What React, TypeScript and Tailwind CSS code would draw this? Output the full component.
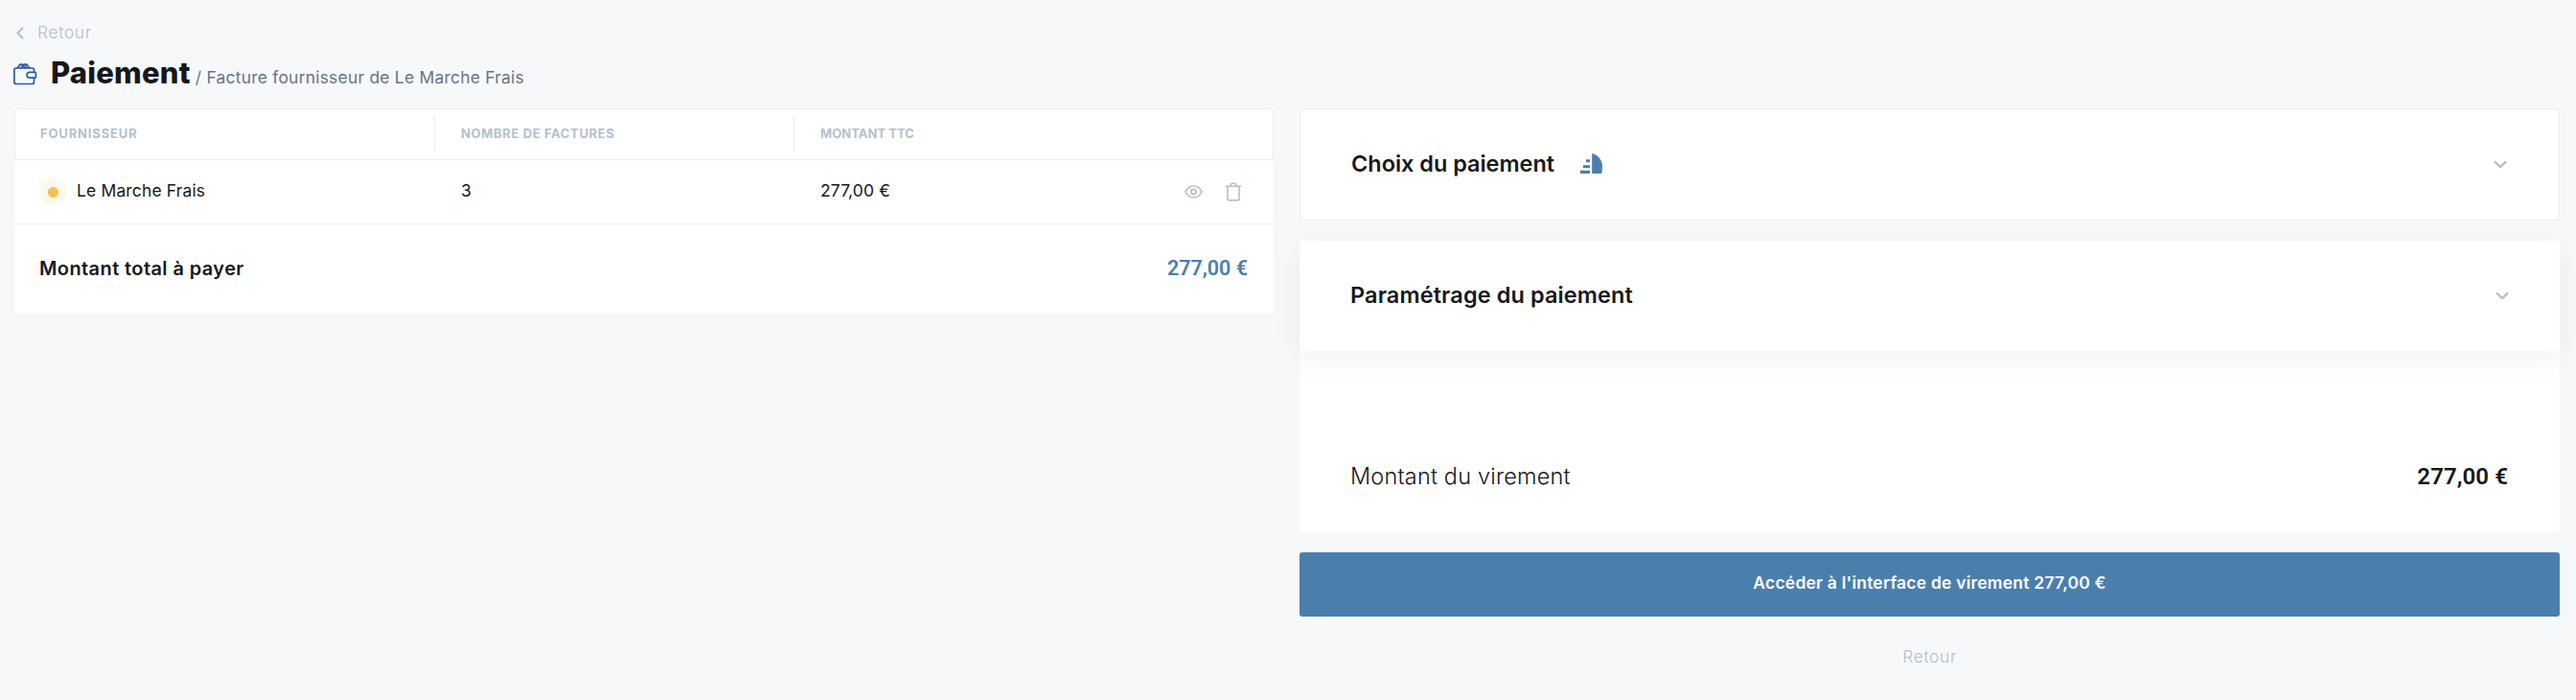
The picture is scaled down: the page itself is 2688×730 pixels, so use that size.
import React from "react";

const WalletIcon = () => (
  <svg className="mt-[2px] h-[23px] w-[25px] shrink-0" viewBox="0 0 25 23" fill="none" stroke="#2a5ca6" strokeWidth="1.7" strokeLinecap="round" strokeLinejoin="round">
    <path d="M21.500 9V7a2 2 0 0 0-2-2H2.900a2 2 0 0 0-2 2v12.500a2 2 0 0 0 2 2h16.600a2 2 0 0 0 2-2V15" />
    <path d="M17 9.300h5.500a.900.900 0 0 1 .900.900v4a.900.900 0 0 1-.900.900H17a2.900 2.900 0 0 1 0-5.800Z" />
    <path d="M4.500 4.800 6.800 1.200h2.400l2.500 3.600M10 2.400l1-1.200h3l2.700 3.600M8 4.800l1-2M13.500 4.800l-.800-2" />
  </svg>
);

const EyeIcon = () => (
  <svg className="h-[14px] w-[19px]" viewBox="0 0 19 14" fill="none" stroke="#b5bfcd" strokeWidth="1.700">
    <path d="M1 7c1.700-3.700 4.800-6 8.500-6S16.300 3.300 18 7c-1.700 3.700-4.800 6-8.500 6S2.700 10.700 1 7Z" />
    <circle cx="9.500" cy="7" r="2.600" />
  </svg>
);

const TrashIcon = () => (
  <svg className="h-[20px] w-[16px]" viewBox="0 0 16 20" fill="none" stroke="#b5bfcd" strokeWidth="1.600">
    <path d="M0 4.200h16M2 4.200v13a1.700 1.700 0 0 0 1.700 1.700h8.600a1.700 1.700 0 0 0 1.700-1.700v-13M5.200 4V2.500A1.300 1.300 0 0 1 6.500 1.200h3a1.300 1.300 0 0 1 1.300 1.300V4" />
  </svg>
);

const BankLogo = () => (
  <svg className="h-[22px] w-[23px]" viewBox="0 0 23 22" fill="#4b7fab">
    <path d="M12.200 0C18.500 1.400 23 6.800 23 13.500c0 2.800-.2 5.200-.7 7.500H12.200Z" />
    <path d="M6 6.300h4v3H6zM3 12.200h7v3H3zM0 17.800h10V21H0z" />
  </svg>
);

const Chevron = () => (
  <svg className="h-[9px] w-[14px]" viewBox="0 0 14 9" fill="none" stroke="#b5bfcd" strokeWidth="2.400">
    <path d="m1 1.300 6 5.700 6-5.700" />
  </svg>
);

const App = () => {
  return (
    <div className="h-[730px] w-full overflow-hidden bg-[#f7f8fa] pl-[15px] pr-[17px] font-['Inter',sans-serif] text-[17.5px] font-normal text-[#17181a]">
      <header className="h-[113px] pt-[20px]">
        <a href="#" className="flex h-[28px] items-center pl-[2px] font-light tracking-[0.6px] text-[#b5bfcd]">
          <svg className="mr-[14px] h-[13px] w-[8px]" viewBox="0 0 8 13" fill="none" stroke="#b5bfcd" strokeWidth="2.200">
            <path d="M7 .8 1.500 6.500 7 12.200" />
          </svg>
          Retour
        </a>
        <div className="-ml-px flex h-[56px] items-center">
          <WalletIcon />
          <div className="ml-[14px] flex items-baseline">
            <h1 className="text-[31px] leading-[40px] font-extrabold tracking-[0.2px]">Paiement</h1>
            <p className="ml-[5px] tracking-[0.2px] text-[#68748a]">/ Facture fournisseur de Le Marche Frais</p>
          </div>
        </div>
      </header>

      <main className="grid grid-cols-[1314px_minmax(0,1fr)] items-start gap-[27px]">
        <section className="bg-white">
          <div className="flex h-[54px] items-center rounded-t-[4px] border border-[#e9ecf2] text-[13px] font-bold text-[#b5bfcd]">
            <div className="flex h-[38px] w-[438px] items-center border-r border-[#e9ecf2] pl-[26px] tracking-[0.85px]">FOURNISSEUR</div>
            <div className="flex h-[38px] w-[375px] items-center border-r border-[#e9ecf2] pl-[27px] tracking-[0.64px]">NOMBRE DE FACTURES</div>
            <div className="pl-[27px] tracking-[0.05px]">MONTANT TTC</div>
          </div>
          <div className="flex h-[67px] items-center border-b border-[#e9ecf2] tracking-[0.14px]">
            <div className="flex w-[466px] items-center pl-[27px]">
              <span className="flex size-[27px] items-center justify-center rounded-full bg-[#fef8ec]">
                <span className="size-[11px] rounded-full bg-[#f5c153]" />
              </span>
              <span className="ml-[11px] pb-px">Le Marche Frais</span>
            </div>
            <div className="w-[375px] pb-px">3</div>
            <div className="pb-px">277,00 €</div>
            <div className="ml-auto mr-[34px] flex items-center gap-[24px]">
              <EyeIcon />
              <TrashIcon />
            </div>
          </div>
          <div className="flex h-[93px] items-center justify-between pr-[27px] pl-[26px] font-semibold">
            <span className="pb-[2px] text-[20px] tracking-[0.4px]">Montant total à payer</span>
            <span className="font-['Roboto',sans-serif] text-[21.5px] text-[#4b7fab]">277,00 €</span>
          </div>
        </section>

        <section>
          <div className="flex h-[117px] items-center rounded-[4px] border border-[#e9ecf2] bg-white pr-[54px] pl-[53px]">
            <h2 className="pb-[2px] text-[23.5px] font-semibold tracking-[-0.03px]">Choix du paiement</h2>
            <span className="ml-[27px] pb-px">
              <BankLogo />
            </span>
            <span className="ml-auto">
              <Chevron />
            </span>
          </div>

          <div className="mt-[21px] rounded-[4px] bg-white">
            <div className="flex h-[115px] items-center justify-between rounded-[4px] bg-white pr-[53px] pl-[53px] shadow-[0_8px_32px_rgba(0,0,0,0.06)]">
              <h2 className="pb-[2px] text-[23.5px] font-semibold tracking-[0.1px]">Paramétrage du paiement</h2>
              <Chevron />
            </div>
            <div className="flex h-[189px] items-end justify-between pr-[54px] pb-[40px] pl-[53px] text-[23.5px] leading-[36px]">
              <span className="font-light tracking-[0.18px]">Montant du virement</span>
              <span className="font-['Roboto',sans-serif] text-[24px] font-semibold tracking-[0.1px]">277,00 €</span>
            </div>
          </div>

          <button type="button" className="mt-[21px] h-[67px] w-full rounded-[3px] bg-[#4b7fab] pb-[2px] font-semibold tracking-[0.21px] text-white">
            Accéder à l'interface de virement 277,00 €
          </button>
          <a href="#" className="mt-[28px] block text-center font-light leading-[28px] tracking-[0.6px] text-[#b5bfcd]">
            Retour
          </a>
        </section>
      </main>
    </div>
  );
};

export default App;
